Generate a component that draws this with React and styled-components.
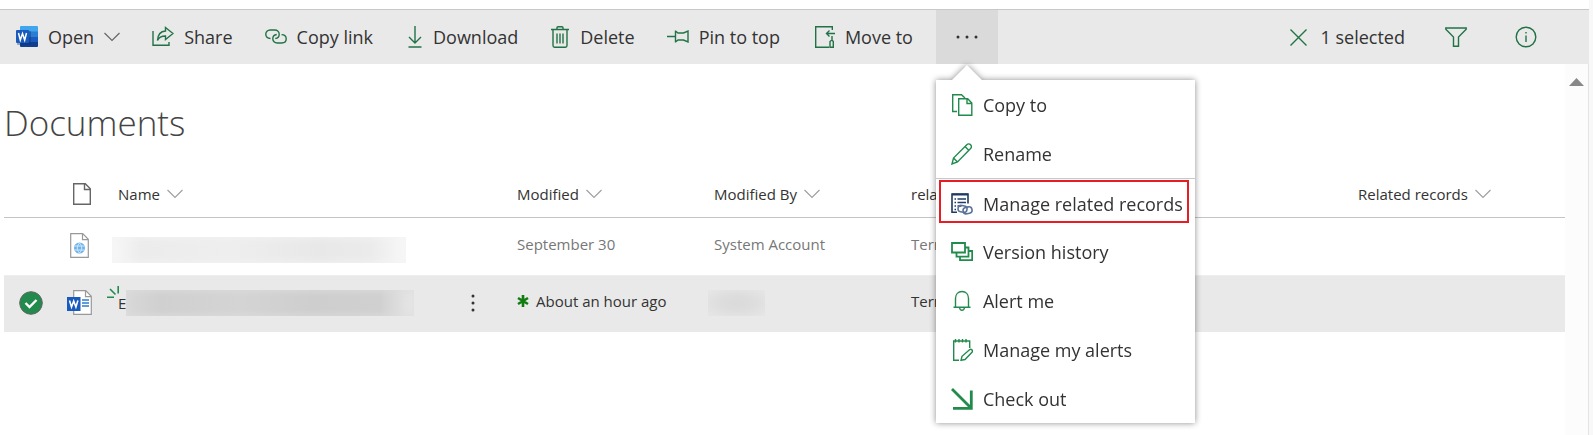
import React from 'react';
import styled, { createGlobalStyle, css } from 'styled-components';

const GlobalStyle = createGlobalStyle`
  * {
    box-sizing: border-box;
  }

  body {
    margin: 0;
    background: #ffffff;
    color: #333333;
    font-family: "Open Sans", "Noto Sans", sans-serif;
  }

  button {
    margin: 0;
    border: 0;
    background: none;
    color: inherit;
    font: inherit;
    cursor: pointer;
  }

  svg {
    display: block;
    flex: none;
  }
`;

const Page = styled.div`
  display: flex;
  flex-direction: column;
  min-height: 100vh;
  padding-top: 9px;
  border-right: 4px solid #f8f8f8;
`;

const Toolbar = styled.header`
  display: flex;
  justify-content: space-between;
  height: 55px;
  border-top: 1px solid #c8c8c8;
  background: #e9e9e9;
`;

const ToolbarGroup = styled.div`
  display: flex;
  padding-right: ${props => (props.$end ? '28px' : '0')};
`;

const ToolbarButton = styled.button`
  display: flex;
  align-items: center;
  gap: ${props => (props.$wide ? '14px' : '10px')};
  padding: 0 16px;
  font-size: 18px;
  line-height: 24px;
  white-space: nowrap;
`;

const IconButton = styled(ToolbarButton)`
  padding: 0 24px;
`;

const MoreWrap = styled.div`
  position: relative;
  margin-left: 7px;
`;

const MoreButton = styled.button`
  display: flex;
  align-items: center;
  justify-content: center;
  width: 62px;
  height: 100%;
  padding: 0;
  background: #dadada;
`;

const Menu = styled.ul`
  position: absolute;
  z-index: 1;
  top: 70px;
  left: 0;
  display: grid;
  grid-template-columns: minmax(0, 1fr);
  grid-auto-rows: 1fr;
  width: 259px;
  min-height: 343px;
  margin: 0;
  padding: 0;
  list-style: none;
  background: #ffffff;
  filter: drop-shadow(0 0 3px rgba(0, 0, 0, 0.45));

  &::before {
    content: "";
    position: absolute;
    top: -15px;
    left: 15px;
    width: 32px;
    height: 16px;
    background: #ffffff;
    clip-path: polygon(50% 0, 100% 100%, 0 100%);
  }
`;

const MenuItem = styled.li`
  display: flex;
  padding: ${props => (props.$marked ? '1px 6px 4px 3px' : '0')};
  border-top: ${props => (props.$divided ? '1px solid #c8c8c8' : '0')};
`;

const MenuButton = styled.button`
  display: flex;
  flex: 1;
  align-items: center;
  gap: 10px;
  min-width: 0;
  padding: 0 0 0 15px;
  font-size: 18px;
  line-height: 24px;
  white-space: nowrap;

  ${props => props.$marked && css`
    padding: 4px 0 0 10px;
    border: 2px solid #e81c24;
  `}
`;

const Body = styled.div`
  display: flex;
  flex: 1;
`;

const Main = styled.main`
  flex: 1;
  padding: 34px 0 0 4px;
`;

const ScrollTrack = styled.div`
  width: 24px;
  padding: 14px 4px;
  border-right: 1px solid #e4e4e4;
  background: #fcfcfc;
`;

const Title = styled.h1`
  margin: 0 0 16px;
  font-size: 35px;
  font-weight: 300;
  line-height: 50px;
  color: #444444;
`;

const Table = styled.table`
  width: 100%;
  border-collapse: separate;
  border-spacing: 0;
  table-layout: fixed;
`;

const Col = styled.col`
  width: ${props => props.$width};
`;

const Th = styled.th`
  height: 54px;
  padding: 6px 6px 0;
  padding-left: ${props => (props.$icon ? '15px' : '6px')};
  border-bottom: 1px solid #c4c4c4;
  font-weight: 400;
  text-align: left;
`;

const SortButton = styled.button`
  display: flex;
  align-items: center;
  gap: 7px;
  padding: 0;
  font-size: 15px;
  line-height: 20px;
  white-space: nowrap;
`;

const Tr = styled.tr`
  background: ${props => (props.$selected ? '#e9e9e9' : '#ffffff')};
  color: ${props => (props.$selected ? '#333333' : '#777777')};
`;

const Td = styled.td`
  height: ${props => (props.$selected ? '56px' : '58px')};
  padding: 0 0 2px ${props => props.$left || '6px'};
  padding-bottom: ${props => (props.$text ? '6px' : '2px')};
  border-bottom: 1px solid ${props => (props.$selected ? '#e9e9e9' : '#eeeeee')};
  font-size: 15px;
  line-height: 20px;
  white-space: nowrap;
`;

const NameCell = styled.div`
  position: relative;
  display: flex;
  align-items: center;
  padding-top: ${props => (props.$low ? '8px' : '0')};
`;

const Redacted = styled.span`
  display: block;
  width: ${props => props.$width};
  height: 26px;
  background: ${props => (props.$dark
    ? 'linear-gradient(90deg, #d8d8d8, #d0d0d0 12%, #d4d4d4 40%, #cecece 65%, #d0d0d0 88%, #e8e8e8)'
    : 'linear-gradient(90deg, #f8f8f8, #ececec 10%, #eeeeee 40%, #e8e8e8 70%, #ebebeb 88%, #f8f8f8)')};
  box-shadow: inset 0 0 8px ${props => (props.$dark ? '#dddddd' : '#f4f4f4')};
`;

const RedactedPerson = styled(Redacted)`
  background: radial-gradient(#dadada, #dddddd 40%, #e5e5e5 90%);
  box-shadow: none;
`;

const NewMark = styled.span`
  position: absolute;
  top: -4px;
  left: -11px;
`;

const RowMenuButton = styled.button`
  margin-left: auto;
  padding: 2px 36px;
`;

const Modified = styled.span`
  display: flex;
  align-items: center;
  gap: 7px;
`;

const Check = styled.label`
  display: block;
  width: 24px;
  height: 24px;

  input {
    position: absolute;
    width: 24px;
    height: 24px;
    margin: 0;
    opacity: 0;
  }
`;

const GREEN = '#217346';
const BRIGHT_GREEN = '#218a4c';

const Icon = ({ x = 0, width = 22, height = 22, stroke = GREEN, strokeWidth = 1.4, children }) => (
  <svg
    width={width}
    height={height}
    viewBox={`${x} 0 ${width} ${height}`}
    fill="none"
    stroke={stroke}
    strokeWidth={strokeWidth}
    aria-hidden="true"
  >
    {children}
  </svg>
);

const WordIcon = () => (
  <Icon stroke="none">
    <path d="M5 0h16a1 1 0 0 1 1 1v5H4V1a1 1 0 0 1 1-1z" fill="#41a5ee" />
    <path d="M4 5.500h18V11H4z" fill="#2b7cd3" />
    <path d="M4 11h18v5.500H4z" fill="#185abd" />
    <path d="M4 16h18v4a1 1 0 0 1-1 1H5a1 1 0 0 1-1-1z" fill="#103f91" />
    <rect x="1" y="5" width="14" height="14" rx="1" fill="#0b3570" opacity="0.4" />
    <rect y="4" width="13" height="13" rx="1" fill="#185abd" />
    <path d="M2.500 7l1.800 7 2.200-6.500L8.700 14l1.800-7" stroke="#ffffff" strokeWidth="1.5" />
  </Icon>
);

const ChevronIcon = ({ color = '#666666' }) => (
  <Icon width={16} height={10} stroke={color} strokeWidth={1.2}>
    <path d="M.5 1l7.500 7.500L15.500 1" />
  </Icon>
);

const ShareIcon = () => (
  <Icon>
    <path d="M1 5v14.300h16V16" />
    <path d="M13.500 1.500L21 7.500l-7.500 6v-3.500c-4 0-6.500 1-8 4.500.3-6 3.500-9.200 8-9.500z" />
  </Icon>
);

const LinkIcon = () => (
  <Icon>
    <path d="M5.500 12.500C2.500 12.300.8 10.500.8 8.300.8 6 2.500 4 5.200 4h4.600c2.600 0 4.400 1.900 4.400 4.200 0 2.200-1.600 4-3.900 4.300" />
    <path d="M16.500 8.600c3 .1 4.700 2 4.700 4.200 0 2.300-1.700 4.200-4.400 4.200h-4.600c-2.600 0-4.400-1.900-4.400-4.200 0-2.200 1.600-4 3.900-4.300" />
  </Icon>
);

const DownloadIcon = () => (
  <Icon x={-3} width={18}>
    <path d="M7 0v17M1 11l6 6 6-6M.5 21h13" />
  </Icon>
);

const DeleteIcon = () => (
  <Icon x={-1} width={20}>
    <path d="M0 3.500h18M6 3V1.700Q6 .7 7 .7h4q1 0 1 1V3M2 4v15.500q0 1.700 1.500 1.700h11q1.500 0 1.500-1.700V4" />
    <path d="M6 7.500v10M9 7.500v10M12 7.500v10" />
  </Icon>
);

const PinIcon = () => (
  <Icon>
    <path d="M0 10.500h8.500M8.500 4.500v12M8.500 5l2.500 2h5.500l4.500-2v11l-4.500-2H11l-2.500 2" />
  </Icon>
);

const MoveIcon = () => (
  <Icon x={-3} width={23}>
    <path d="M17.300 4V.7H.7v20.600H14M20 7.500h-8.500M14.500 4.500l-3 3 3 3" />
    <path d="M17 10v4M15 21.300V15.500l2-1.500 1.300 1.500v5.800z" />
  </Icon>
);

const MoreIcon = () => (
  <Icon stroke="none">
    <g fill="#333333">
      <circle cx="2" cy="11" r="1.5" />
      <circle cx="11" cy="11" r="1.5" />
      <circle cx="20" cy="11" r="1.5" />
    </g>
  </Icon>
);

const CloseIcon = () => (
  <Icon width={17} height={17}>
    <path d="M.5.5l16 16M16.500.5l-16 16" />
  </Icon>
);

const FilterIcon = () => (
  <Icon>
    <path d="M.8 2h20.400v1.200L13.500 11v9.300h-5V11L.8 3.200z" />
  </Icon>
);

const InfoIcon = () => (
  <Icon>
    <circle cx="11" cy="11" r="9.800" />
    <path d="M11 9.500v6.500M11 6v1.600" />
  </Icon>
);

const CopyIcon = () => (
  <Icon stroke={BRIGHT_GREEN}>
    <path d="M6 17.500H1.700V.7h8.800L14 4" />
    <path d="M7.700 4.700h9L20.800 9v12.300H7.700zM16 5v4.500h4.500" />
  </Icon>
);

const RenameIcon = () => (
  <Icon stroke={BRIGHT_GREEN}>
    <path d="M1 21l1.500-6L15.800 1.700c1.200-1.200 2.800-1 3.800 0s1.200 2.600 0 3.800L6.500 19zM2.500 15L6.500 19M14 3.500l4 4" />
  </Icon>
);

const RecordsIcon = () => (
  <Icon stroke="#1f3a63">
    <path d="M6 19.300H1V1h16v9.500" strokeWidth="1.6" />
    <path d="M1 1.500h16" strokeWidth="2" />
    <path d="M3.500 6h1.500M6.500 6H15M3.500 9.500H5M6.500 9.500H15M3.500 13H5M6.500 13h4M3.500 16.500H5" />
    <g stroke="#5b7397" strokeWidth="1.6">
      <rect x="7" y="12.500" width="9" height="6.500" rx="3.200" transform="rotate(12 11 16)" />
      <rect x="12" y="14" width="9" height="6.500" rx="3.200" transform="rotate(-12 17 17)" />
    </g>
  </Icon>
);

const HistoryIcon = () => (
  <Icon stroke={BRIGHT_GREEN} strokeWidth={1.8}>
    <path d="M1 2h13v9.500H1zM14 6.500h3.500v9.200H5.500V12M18 10h3.200v9.200H9V16" />
  </Icon>
);

const BellIcon = () => (
  <Icon stroke={BRIGHT_GREEN}>
    <path d="M2.500 17.300h17M4.500 17V8.500c0-4.200 2.700-7 6.500-7s6.500 2.800 6.500 7V17M8.500 17.500c.3 2 1.200 2.800 2.500 2.800s2.200-.8 2.500-2.800" />
  </Icon>
);

const AlertsIcon = () => (
  <Icon stroke={BRIGHT_GREEN}>
    <path d="M8 21.300H2.700V2h16v7M4.500 0v3.500M8 0v3.500M11.500 0v3.500M15 0v3.500" />
    <path d="M10 21.300l1-4 7.500-6.500c1.800-1.300 3.800.7 2.500 2.400L14 20.500z" />
  </Icon>
);

const CheckOutIcon = () => (
  <Icon stroke={BRIGHT_GREEN} strokeWidth={2.8}>
    <path d="M1 1l18.500 18.500M20.300 2.500v17.900H2" />
  </Icon>
);

const FileIcon = () => (
  <Icon width={18} stroke="#666666">
    <path d="M.7.7h11.600l5 5v15.600H.7zM11.500 1v5.500H17" />
  </Icon>
);

const WebFileIcon = () => (
  <Icon width={19} height={25} stroke="#999999" strokeWidth={1.2}>
    <path d="M.7.7h12l5.600 5.600v18H.7zM12.500 1v5.700H18" />
    <circle cx="9.500" cy="15" r="5.500" fill="#6cb2ea" stroke="none" />
    <path d="M4.500 13h10M4.500 17h10M9.500 10c-3 3-3 7 0 10 3-3 3-7 0-10z" stroke="#d4e9fa" strokeWidth="1" />
  </Icon>
);

const WordFileIcon = () => (
  <Icon width={25} height={25} stroke="#999999" strokeWidth={1.2}>
    <path d="M6.700.7h12l5.600 5.600v18H6.700z" fill="#ffffff" />
    <path d="M18.500 1v5.700H24" />
    <path d="M15 10h7M15 13h7M15 16h7" stroke="#2b7cd3" strokeWidth="1.5" />
    <path d="M0 7h13.500v14H0z" fill="#185abd" stroke="none" />
    <path d="M2.500 10.500L4.500 17l2.200-6 2.200 6 2-6.500" stroke="#ffffff" strokeWidth="1.6" />
  </Icon>
);

const CheckedIcon = () => (
  <Icon width={24} height={24} stroke="#666666" strokeWidth={1}>
    <circle cx="12" cy="12" r="11.300" fill={BRIGHT_GREEN} />
    <path d="M6.500 12l4 4 7-7" stroke="#ffffff" strokeWidth="2.4" />
  </Icon>
);

const NewIcon = () => (
  <Icon width={12} height={12} stroke={BRIGHT_GREEN} strokeWidth={1.6}>
    <path d="M11.200 0v7.500M3 3l5.500 5.500M0 11.200h7" />
  </Icon>
);

const StarIcon = () => (
  <Icon width={12} height={12} stroke="#107c10" strokeWidth={2.6}>
    <path d="M6 0v12M1 3l10 6M11 3L1 9" />
  </Icon>
);

const DotsIcon = () => (
  <Icon width={4} height={18} stroke="none">
    <g fill="#333333">
      <circle cx="2" cy="2" r="1.5" />
      <circle cx="2" cy="9" r="1.5" />
      <circle cx="2" cy="16" r="1.5" />
    </g>
  </Icon>
);

const ACTIONS = [
  { label: 'Share', Glyph: ShareIcon },
  { label: 'Copy link', Glyph: LinkIcon },
  { label: 'Download', Glyph: DownloadIcon },
  { label: 'Delete', Glyph: DeleteIcon },
  { label: 'Pin to top', Glyph: PinIcon },
  { label: 'Move to', Glyph: MoveIcon },
];

const MENU = [
  { label: 'Copy to', Glyph: CopyIcon },
  { label: 'Rename', Glyph: RenameIcon },
  { label: 'Manage related records', Glyph: RecordsIcon, divided: true, marked: true },
  { label: 'Version history', Glyph: HistoryIcon },
  { label: 'Alert me', Glyph: BellIcon },
  { label: 'Manage my alerts', Glyph: AlertsIcon },
  { label: 'Check out', Glyph: CheckOutIcon },
];

const COLUMNS = ['Name', 'Modified', 'Modified By', 'rela', 'Related records'];

const MoreMenu = () => (
  <MoreWrap>
    <MoreButton type="button" aria-label="More" aria-expanded="true">
      <MoreIcon />
    </MoreButton>
    <Menu>
      {MENU.map(({ label, Glyph, divided, marked }) => (
        <MenuItem key={label} $divided={divided} $marked={marked}>
          <MenuButton type="button" $marked={marked}>
            <Glyph />
            {label}
          </MenuButton>
        </MenuItem>
      ))}
    </Menu>
  </MoreWrap>
);

const DocumentsTable = () => (
  <Table>
    <colgroup>
      <Col $width="54px" />
      <Col $width="54px" />
      <Col $width="399px" />
      <Col $width="197px" />
      <Col $width="197px" />
      <Col $width="447px" />
      <Col />
    </colgroup>
    <thead>
      <tr>
        <Th />
        <Th $icon>
          <SortButton type="button" aria-label="File type">
            <FileIcon />
          </SortButton>
        </Th>
        {COLUMNS.map(name => (
          <Th key={name}>
            <SortButton type="button">
              {name}
              <ChevronIcon color="#a0a0a0" />
            </SortButton>
          </Th>
        ))}
      </tr>
    </thead>
    <tbody>
      <Tr>
        <Td />
        <Td $left="12px"><WebFileIcon /></Td>
        <Td $left="0"><NameCell $low><Redacted $width="294px" /></NameCell></Td>
        <Td $text>September 30</Td>
        <Td $text>System Account</Td>
        <Td $text>Term</Td>
        <Td />
      </Tr>
      <Tr $selected>
        <Td $selected $left="15px">
          <Check>
            <input type="checkbox" defaultChecked aria-label="Select document" />
            <CheckedIcon />
          </Check>
        </Td>
        <Td $selected $left="9px"><WordFileIcon /></Td>
        <Td $selected>
          <NameCell>
            <NewMark><NewIcon /></NewMark>
            E
            <Redacted $width="288px" $dark />
            <RowMenuButton type="button" aria-label="Show actions"><DotsIcon /></RowMenuButton>
          </NameCell>
        </Td>
        <Td $selected $text><Modified><StarIcon />About an hour ago</Modified></Td>
        <Td $selected $left="0"><RedactedPerson $width="57px" /></Td>
        <Td $selected $text>Term</Td>
        <Td $selected />
      </Tr>
    </tbody>
  </Table>
);

export default function App() {
  return (
    <>
      <GlobalStyle />
      <Page>
        <Toolbar>
          <ToolbarGroup>
            <ToolbarButton type="button">
              <WordIcon />
              Open
              <ChevronIcon />
            </ToolbarButton>
            {ACTIONS.map(({ label, Glyph }) => (
              <ToolbarButton type="button" key={label}>
                <Glyph />
                {label}
              </ToolbarButton>
            ))}
            <MoreMenu />
          </ToolbarGroup>
          <ToolbarGroup $end>
            <ToolbarButton type="button" $wide>
              <CloseIcon />
              1 selected
            </ToolbarButton>
            <IconButton type="button" aria-label="Filter"><FilterIcon /></IconButton>
            <IconButton type="button" aria-label="Details"><InfoIcon /></IconButton>
          </ToolbarGroup>
        </Toolbar>
        <Body>
          <Main>
            <Title>Documents</Title>
            <DocumentsTable />
          </Main>
          <ScrollTrack>
            <Icon width={15} height={8} stroke="none">
              <path d="M7.500 0L15 8H0z" fill="#888888" />
            </Icon>
          </ScrollTrack>
        </Body>
      </Page>
    </>
  );
}
